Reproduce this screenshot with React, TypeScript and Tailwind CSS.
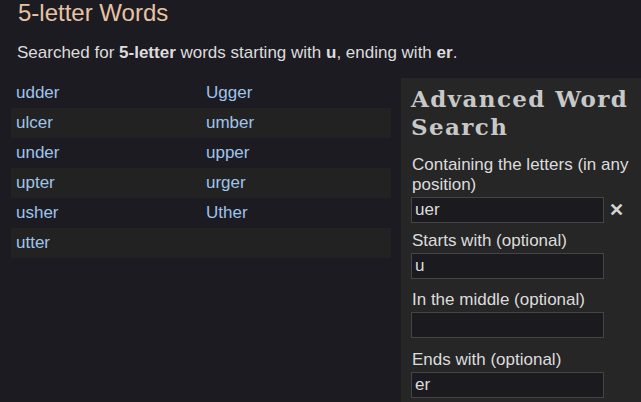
import React from 'react';

const words = ['udder', 'Ugger', 'ulcer', 'umber', 'under', 'upper', 'upter', 'urger', 'usher', 'Uther', 'utter'];

const rows: string[][] = [];
for (let i = 0; i < words.length; i += 2) rows.push(words.slice(i, i + 2));

const fields = [
  { label: 'Starts with (optional)', value: 'u' },
  { label: 'In the middle (optional)', value: '' },
  { label: 'Ends with (optional)', value: 'er' },
];

export default function App() {
  return (
    <div className="min-h-screen bg-[#1c1b22] text-[#dcdcdc] font-['Liberation_Sans',Arial,sans-serif] overflow-hidden">
      <h1 className="pl-[18px] text-[24px] leading-[26px] text-[#e6c3a2]">5-letter Words</h1>
      <p className="pl-[17px] mt-[17px] text-[17px] leading-[19px] text-[#dcdcdc]">
        Searched for <b>5-letter</b> words starting with <b>u</b>, ending with <b>er</b>.
      </p>

      <div className="flex mt-[16px] pl-[11px] gap-[10px]">
        {/* Word list */}
        <div className="w-[380px] shrink-0 self-start">
          {rows.map((r, i) => (
            <div key={i} className={`grid grid-cols-2 h-[30px] items-center ${i % 2 === 1 ? 'bg-[#222222]' : ''}`}>
              {[0, 1].map(j => (
                <a key={j} className="pl-[5px] text-[17px] text-[#9fc4ea]">{r[j] || ''}</a>
              ))}
            </div>
          ))}
        </div>

        {/* Advanced search */}
        <div className="flex-1 bg-[#262626] pl-[10px] pt-[7px] min-h-[330px]">
          <h2 className="font-['DejaVu_Serif',serif] font-bold text-[23px] leading-[28px] text-[#c8c8c8] tracking-[1.4px]">
            Advanced Word<br />Search
          </h2>
          <label className="block mt-[14px] text-[17px] leading-[20px] w-[230px] pl-[1px]">
            Containing the letters (in any position)
          </label>
          <div className="flex items-center gap-[5px] mt-[2px]">
            <input
              readOnly
              value="uer"
              className="w-[193px] h-[26px] bg-[#1b1b1f] border border-[#444] px-[3px] text-[17px] text-[#dcdcdc] outline-none"
            />
            <span className="text-[18px] leading-none text-[#d4d4d4] font-bold">✕</span>
          </div>
          {fields.map((f, i) => (
            <div key={f.label}>
              <label className={`block ${i === 0 ? 'mt-[8px]' : i === 1 ? 'mt-[11px]' : 'mt-[12px]'} text-[17px] leading-[20px] pl-[1px]`}>{f.label}</label>
              <input
                readOnly
                value={f.value}
                className="block mt-[2px] w-[193px] h-[26px] bg-[#1b1b1f] border border-[#444] px-[3px] text-[17px] text-[#dcdcdc] outline-none"
              />
            </div>
          ))}
        </div>
      </div>
    </div>
  );
}
